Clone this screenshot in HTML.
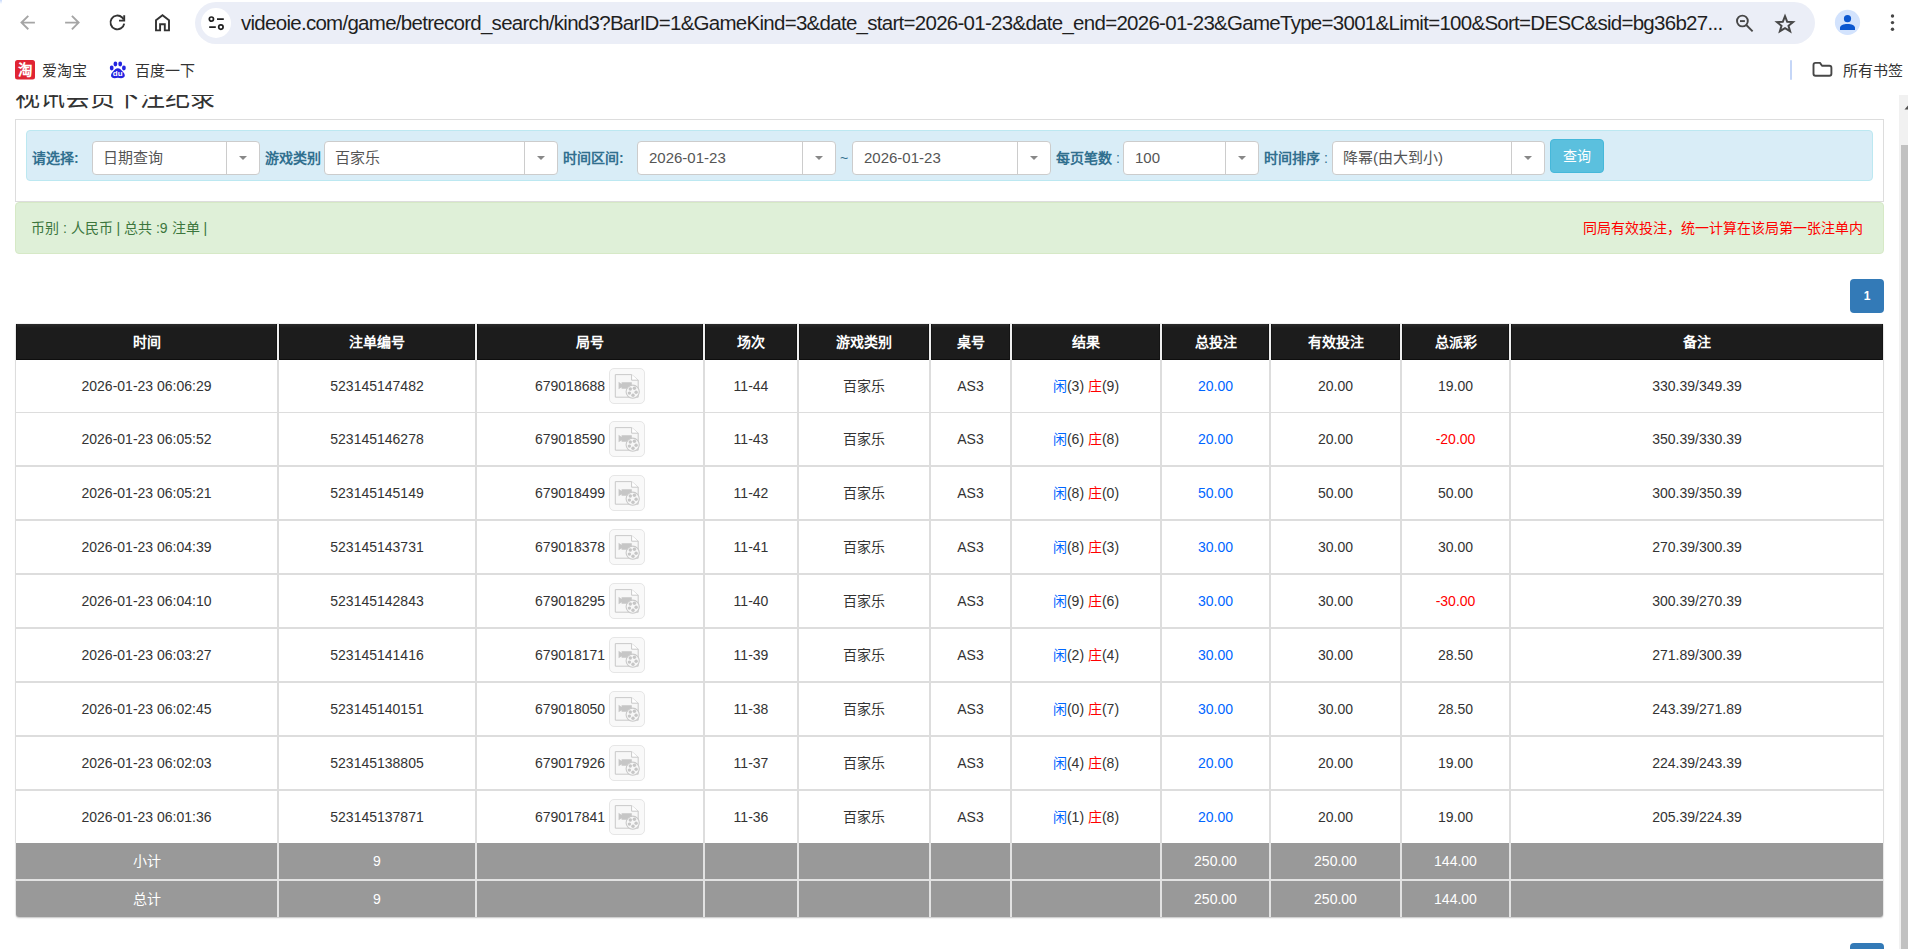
<!DOCTYPE html><html lang="zh-CN"><head><meta charset="utf-8"><style>
*{box-sizing:border-box;margin:0;padding:0}
html,body{width:1908px;height:949px;overflow:hidden;background:#fff}
body{position:relative;font-family:"Liberation Sans",sans-serif;font-size:14px;color:#333}
.a{position:absolute}
#chrome{position:absolute;left:0;top:0;width:1908px;height:95px;background:#fff;z-index:5}
#omni{position:absolute;left:195px;top:2px;width:1620px;height:42px;border-radius:21px;background:#ebeef7}
#siteinfo{position:absolute;left:201px;top:8px;width:30px;height:30px;border-radius:15px;background:#fff}
#url{position:absolute;left:241px;top:10px;font-size:20.5px;line-height:26px;color:#1f1f1f;white-space:nowrap;letter-spacing:-0.72px}
.bm{position:absolute;top:62px;font-size:15px;line-height:18px;color:#333;white-space:nowrap}
#sb{position:absolute;left:1899px;top:95px;width:9px;height:854px;background:#f1f1f1;z-index:4;overflow:hidden}
#sbthumb{position:absolute;left:2px;top:50px;width:7px;height:804px;background:#c1c1c1}
#title{position:absolute;left:15px;top:82px;font-size:25px;line-height:30px;color:#333;white-space:nowrap}
#panel{position:absolute;left:15px;top:119px;width:1869px;height:83px;border:1px solid #ddd;background:#fff}
#form{position:absolute;left:26px;top:130px;width:1847px;height:51px;border:1px solid #bce8f1;border-radius:4px;background:#d9edf7}
.lbl{position:absolute;top:149px;font-size:14px;line-height:18px;font-weight:bold;color:#31708f;white-space:nowrap}
.sel{position:absolute;top:141px;height:34px;border:1px solid #ccc;border-radius:4px;background:#fff}
.sel .t{position:absolute;left:10px;top:6px;font-size:15px;line-height:20px;color:#555;white-space:nowrap}
.sel .d{position:absolute;top:0;right:0;width:33px;height:32px;border-left:1px solid #ccc}
.sel .d:after{content:"";position:absolute;left:12px;top:14px;border-left:4px solid transparent;border-right:4px solid transparent;border-top:4px solid #888}
#btn{position:absolute;left:1550px;top:139px;width:54px;height:34px;border-radius:4px;background:#5bc0de;border:1px solid #46b8da;color:#fff;font-size:14px;line-height:32px;text-align:center}
#alert{position:absolute;left:15px;top:202px;width:1869px;height:52px;border:1px solid #d6e9c6;border-radius:4px;background:#dff0d8}
#alertL{position:absolute;left:31px;top:219px;font-size:14px;line-height:18px;color:#3c763d;white-space:nowrap}
#alertR{position:absolute;left:1583px;top:219px;font-size:14px;line-height:18px;color:#f00;white-space:nowrap}
.pg{position:absolute;left:1850px;width:34px;height:34px;border-radius:4px;background:#337ab7;color:#fff;font-size:12px;font-weight:bold;line-height:34px;text-align:center}
#tbl{position:absolute;left:16px;top:324px;width:1867px;height:593px;border-radius:0 0 3px 3px;box-shadow:0 0 1px rgba(0,0,0,.45),0 1px 2px rgba(0,0,0,.2)}
.c{position:absolute;display:flex;align-items:center;justify-content:center;white-space:nowrap;font-size:14px}
.h{background:linear-gradient(#2b2b2b,#1c1c1c 4px);color:#fff;font-weight:bold;padding-bottom:2px;box-shadow:inset 1px 0 0 #141414,inset -1px 0 0 #141414,inset 0 -1px 0 #0e0e0e}
.b{background:#fff;color:#333}
.f{background:#999;color:#fff}
.blue{color:#0066ff}
.up{position:relative;top:-1px}
.red{color:#ff0000}
.ico{display:inline-block;width:36px;height:36px;margin-left:4px;border:1px solid #e6e6e6;border-radius:5px;background:#f9f9f9;position:relative}
.ico svg{position:absolute;left:0;top:0}
</style></head><body>
<div id="title">视讯会员下注纪录</div>
<div id="panel"></div>
<div id="form"></div>
<div class="lbl" style="left:32px">请选择:</div>
<div class="sel" style="left:92px;width:168px"><div class="t">日期查询</div><div class="d"></div></div>
<div class="lbl" style="left:265px">游戏类别</div>
<div class="sel" style="left:324px;width:234px"><div class="t">百家乐</div><div class="d"></div></div>
<div class="lbl" style="left:563px">时间区间:</div>
<div class="sel" style="left:637px;width:199px"><div class="t" style="left:11px">2026-01-23</div><div class="d"></div></div>
<div class="lbl" style="left:840px;font-weight:normal">~</div>
<div class="sel" style="left:852px;width:199px"><div class="t" style="left:11px">2026-01-23</div><div class="d"></div></div>
<div class="lbl" style="left:1056px">每页笔数<span style="font-weight:normal"> :</span></div>
<div class="sel" style="left:1123px;width:136px"><div class="t" style="left:11px">100</div><div class="d"></div></div>
<div class="lbl" style="left:1264px">时间排序<span style="font-weight:normal"> :</span></div>
<div class="sel" style="left:1332px;width:213px"><div class="t">降幂(由大到小)</div><div class="d"></div></div>
<div id="btn">查询</div>
<div id="alert"></div>
<div id="alertL">币别 : 人民币 | 总共 :9 注单 |</div>
<div id="alertR">同局有效投注，统一计算在该局第一张注单内</div>
<div class="pg" style="top:279px">1</div>
<div class="pg" style="top:943px">1</div>
<div id="tbl"></div>
<div class="a" style="left:16px;top:324px;width:1867px;height:36px;background:#efefef"></div>
<div class="a" style="left:15px;top:360px;width:1869px;height:483px;background:#ddd"></div>
<div class="a" style="left:16px;top:843px;width:1867px;height:74px;background:#e2e2e2;border-radius:0 0 3px 3px"></div>
<div class="c h" style="left:16px;top:324px;width:261px;height:36px">时间</div>
<div class="c h" style="left:279px;top:324px;width:196px;height:36px">注单编号</div>
<div class="c h" style="left:477px;top:324px;width:226px;height:36px">局号</div>
<div class="c h" style="left:705px;top:324px;width:92px;height:36px">场次</div>
<div class="c h" style="left:799px;top:324px;width:130px;height:36px">游戏类别</div>
<div class="c h" style="left:931px;top:324px;width:79px;height:36px">桌号</div>
<div class="c h" style="left:1012px;top:324px;width:148px;height:36px">结果</div>
<div class="c h" style="left:1162px;top:324px;width:107px;height:36px">总投注</div>
<div class="c h" style="left:1271px;top:324px;width:129px;height:36px">有效投注</div>
<div class="c h" style="left:1402px;top:324px;width:107px;height:36px">总派彩</div>
<div class="c h" style="left:1511px;top:324px;width:372px;height:36px">备注</div>
<div class="c b" style="left:16px;top:360px;width:261px;height:52px">2026-01-23 06:06:29</div>
<div class="c b" style="left:279px;top:360px;width:196px;height:52px">523145147482</div>
<div class="c b" style="left:477px;top:360px;width:226px;height:52px">679018688<span class="ico"><svg width="34" height="34" viewBox="0 0 34 34"><path d="M5.3 5.6H21.6L28.2 11.2V28.2H5.3Z" fill="#f7f7f7" stroke="#c9c9c9" stroke-width="1"/><path d="M21.6 5.6V11.2H28.2" fill="#fff" stroke="#c9c9c9" stroke-width="1"/><path d="M8.6 12.8L11.6 15V13.2H21.8V19.8H11.6V18.2L8.6 20.2Z" fill="#c6c6c6"/><circle cx="22.7" cy="22.7" r="6.6" fill="#f7f7f7" stroke="#c9c9c9" stroke-width="1.1"/><g fill="#c6c6c6"><circle cx="20.3" cy="20" r="1.7"/><circle cx="24.4" cy="19.2" r="1.7"/><circle cx="26.1" cy="23.3" r="1.7"/><circle cx="23" cy="26.3" r="1.7"/><circle cx="19.4" cy="24.1" r="1.7"/></g></svg></span></div>
<div class="c b" style="left:705px;top:360px;width:92px;height:52px">11-44</div>
<div class="c b" style="left:799px;top:360px;width:130px;height:52px"><span class="up">百家乐</span></div>
<div class="c b" style="left:931px;top:360px;width:79px;height:52px">AS3</div>
<div class="c b" style="left:1012px;top:360px;width:148px;height:52px"><span class="blue up">闲</span>(3)&nbsp;<span class="red up">庄</span>(9)</div>
<div class="c b" style="left:1162px;top:360px;width:107px;height:52px"><span class="blue">20.00</span></div>
<div class="c b" style="left:1271px;top:360px;width:129px;height:52px">20.00</div>
<div class="c b" style="left:1402px;top:360px;width:107px;height:52px">19.00</div>
<div class="c b" style="left:1511px;top:360px;width:372px;height:52px">330.39/349.39</div>
<div class="c b" style="left:16px;top:413px;width:261px;height:52px">2026-01-23 06:05:52</div>
<div class="c b" style="left:279px;top:413px;width:196px;height:52px">523145146278</div>
<div class="c b" style="left:477px;top:413px;width:226px;height:52px">679018590<span class="ico"><svg width="34" height="34" viewBox="0 0 34 34"><path d="M5.3 5.6H21.6L28.2 11.2V28.2H5.3Z" fill="#f7f7f7" stroke="#c9c9c9" stroke-width="1"/><path d="M21.6 5.6V11.2H28.2" fill="#fff" stroke="#c9c9c9" stroke-width="1"/><path d="M8.6 12.8L11.6 15V13.2H21.8V19.8H11.6V18.2L8.6 20.2Z" fill="#c6c6c6"/><circle cx="22.7" cy="22.7" r="6.6" fill="#f7f7f7" stroke="#c9c9c9" stroke-width="1.1"/><g fill="#c6c6c6"><circle cx="20.3" cy="20" r="1.7"/><circle cx="24.4" cy="19.2" r="1.7"/><circle cx="26.1" cy="23.3" r="1.7"/><circle cx="23" cy="26.3" r="1.7"/><circle cx="19.4" cy="24.1" r="1.7"/></g></svg></span></div>
<div class="c b" style="left:705px;top:413px;width:92px;height:52px">11-43</div>
<div class="c b" style="left:799px;top:413px;width:130px;height:52px"><span class="up">百家乐</span></div>
<div class="c b" style="left:931px;top:413px;width:79px;height:52px">AS3</div>
<div class="c b" style="left:1012px;top:413px;width:148px;height:52px"><span class="blue up">闲</span>(6)&nbsp;<span class="red up">庄</span>(8)</div>
<div class="c b" style="left:1162px;top:413px;width:107px;height:52px"><span class="blue">20.00</span></div>
<div class="c b" style="left:1271px;top:413px;width:129px;height:52px">20.00</div>
<div class="c b" style="left:1402px;top:413px;width:107px;height:52px"><span class="red">-20.00</span></div>
<div class="c b" style="left:1511px;top:413px;width:372px;height:52px">350.39/330.39</div>
<div class="c b" style="left:16px;top:467px;width:261px;height:52px">2026-01-23 06:05:21</div>
<div class="c b" style="left:279px;top:467px;width:196px;height:52px">523145145149</div>
<div class="c b" style="left:477px;top:467px;width:226px;height:52px">679018499<span class="ico"><svg width="34" height="34" viewBox="0 0 34 34"><path d="M5.3 5.6H21.6L28.2 11.2V28.2H5.3Z" fill="#f7f7f7" stroke="#c9c9c9" stroke-width="1"/><path d="M21.6 5.6V11.2H28.2" fill="#fff" stroke="#c9c9c9" stroke-width="1"/><path d="M8.6 12.8L11.6 15V13.2H21.8V19.8H11.6V18.2L8.6 20.2Z" fill="#c6c6c6"/><circle cx="22.7" cy="22.7" r="6.6" fill="#f7f7f7" stroke="#c9c9c9" stroke-width="1.1"/><g fill="#c6c6c6"><circle cx="20.3" cy="20" r="1.7"/><circle cx="24.4" cy="19.2" r="1.7"/><circle cx="26.1" cy="23.3" r="1.7"/><circle cx="23" cy="26.3" r="1.7"/><circle cx="19.4" cy="24.1" r="1.7"/></g></svg></span></div>
<div class="c b" style="left:705px;top:467px;width:92px;height:52px">11-42</div>
<div class="c b" style="left:799px;top:467px;width:130px;height:52px"><span class="up">百家乐</span></div>
<div class="c b" style="left:931px;top:467px;width:79px;height:52px">AS3</div>
<div class="c b" style="left:1012px;top:467px;width:148px;height:52px"><span class="blue up">闲</span>(8)&nbsp;<span class="red up">庄</span>(0)</div>
<div class="c b" style="left:1162px;top:467px;width:107px;height:52px"><span class="blue">50.00</span></div>
<div class="c b" style="left:1271px;top:467px;width:129px;height:52px">50.00</div>
<div class="c b" style="left:1402px;top:467px;width:107px;height:52px">50.00</div>
<div class="c b" style="left:1511px;top:467px;width:372px;height:52px">300.39/350.39</div>
<div class="c b" style="left:16px;top:521px;width:261px;height:52px">2026-01-23 06:04:39</div>
<div class="c b" style="left:279px;top:521px;width:196px;height:52px">523145143731</div>
<div class="c b" style="left:477px;top:521px;width:226px;height:52px">679018378<span class="ico"><svg width="34" height="34" viewBox="0 0 34 34"><path d="M5.3 5.6H21.6L28.2 11.2V28.2H5.3Z" fill="#f7f7f7" stroke="#c9c9c9" stroke-width="1"/><path d="M21.6 5.6V11.2H28.2" fill="#fff" stroke="#c9c9c9" stroke-width="1"/><path d="M8.6 12.8L11.6 15V13.2H21.8V19.8H11.6V18.2L8.6 20.2Z" fill="#c6c6c6"/><circle cx="22.7" cy="22.7" r="6.6" fill="#f7f7f7" stroke="#c9c9c9" stroke-width="1.1"/><g fill="#c6c6c6"><circle cx="20.3" cy="20" r="1.7"/><circle cx="24.4" cy="19.2" r="1.7"/><circle cx="26.1" cy="23.3" r="1.7"/><circle cx="23" cy="26.3" r="1.7"/><circle cx="19.4" cy="24.1" r="1.7"/></g></svg></span></div>
<div class="c b" style="left:705px;top:521px;width:92px;height:52px">11-41</div>
<div class="c b" style="left:799px;top:521px;width:130px;height:52px"><span class="up">百家乐</span></div>
<div class="c b" style="left:931px;top:521px;width:79px;height:52px">AS3</div>
<div class="c b" style="left:1012px;top:521px;width:148px;height:52px"><span class="blue up">闲</span>(8)&nbsp;<span class="red up">庄</span>(3)</div>
<div class="c b" style="left:1162px;top:521px;width:107px;height:52px"><span class="blue">30.00</span></div>
<div class="c b" style="left:1271px;top:521px;width:129px;height:52px">30.00</div>
<div class="c b" style="left:1402px;top:521px;width:107px;height:52px">30.00</div>
<div class="c b" style="left:1511px;top:521px;width:372px;height:52px">270.39/300.39</div>
<div class="c b" style="left:16px;top:575px;width:261px;height:52px">2026-01-23 06:04:10</div>
<div class="c b" style="left:279px;top:575px;width:196px;height:52px">523145142843</div>
<div class="c b" style="left:477px;top:575px;width:226px;height:52px">679018295<span class="ico"><svg width="34" height="34" viewBox="0 0 34 34"><path d="M5.3 5.6H21.6L28.2 11.2V28.2H5.3Z" fill="#f7f7f7" stroke="#c9c9c9" stroke-width="1"/><path d="M21.6 5.6V11.2H28.2" fill="#fff" stroke="#c9c9c9" stroke-width="1"/><path d="M8.6 12.8L11.6 15V13.2H21.8V19.8H11.6V18.2L8.6 20.2Z" fill="#c6c6c6"/><circle cx="22.7" cy="22.7" r="6.6" fill="#f7f7f7" stroke="#c9c9c9" stroke-width="1.1"/><g fill="#c6c6c6"><circle cx="20.3" cy="20" r="1.7"/><circle cx="24.4" cy="19.2" r="1.7"/><circle cx="26.1" cy="23.3" r="1.7"/><circle cx="23" cy="26.3" r="1.7"/><circle cx="19.4" cy="24.1" r="1.7"/></g></svg></span></div>
<div class="c b" style="left:705px;top:575px;width:92px;height:52px">11-40</div>
<div class="c b" style="left:799px;top:575px;width:130px;height:52px"><span class="up">百家乐</span></div>
<div class="c b" style="left:931px;top:575px;width:79px;height:52px">AS3</div>
<div class="c b" style="left:1012px;top:575px;width:148px;height:52px"><span class="blue up">闲</span>(9)&nbsp;<span class="red up">庄</span>(6)</div>
<div class="c b" style="left:1162px;top:575px;width:107px;height:52px"><span class="blue">30.00</span></div>
<div class="c b" style="left:1271px;top:575px;width:129px;height:52px">30.00</div>
<div class="c b" style="left:1402px;top:575px;width:107px;height:52px"><span class="red">-30.00</span></div>
<div class="c b" style="left:1511px;top:575px;width:372px;height:52px">300.39/270.39</div>
<div class="c b" style="left:16px;top:629px;width:261px;height:52px">2026-01-23 06:03:27</div>
<div class="c b" style="left:279px;top:629px;width:196px;height:52px">523145141416</div>
<div class="c b" style="left:477px;top:629px;width:226px;height:52px">679018171<span class="ico"><svg width="34" height="34" viewBox="0 0 34 34"><path d="M5.3 5.6H21.6L28.2 11.2V28.2H5.3Z" fill="#f7f7f7" stroke="#c9c9c9" stroke-width="1"/><path d="M21.6 5.6V11.2H28.2" fill="#fff" stroke="#c9c9c9" stroke-width="1"/><path d="M8.6 12.8L11.6 15V13.2H21.8V19.8H11.6V18.2L8.6 20.2Z" fill="#c6c6c6"/><circle cx="22.7" cy="22.7" r="6.6" fill="#f7f7f7" stroke="#c9c9c9" stroke-width="1.1"/><g fill="#c6c6c6"><circle cx="20.3" cy="20" r="1.7"/><circle cx="24.4" cy="19.2" r="1.7"/><circle cx="26.1" cy="23.3" r="1.7"/><circle cx="23" cy="26.3" r="1.7"/><circle cx="19.4" cy="24.1" r="1.7"/></g></svg></span></div>
<div class="c b" style="left:705px;top:629px;width:92px;height:52px">11-39</div>
<div class="c b" style="left:799px;top:629px;width:130px;height:52px"><span class="up">百家乐</span></div>
<div class="c b" style="left:931px;top:629px;width:79px;height:52px">AS3</div>
<div class="c b" style="left:1012px;top:629px;width:148px;height:52px"><span class="blue up">闲</span>(2)&nbsp;<span class="red up">庄</span>(4)</div>
<div class="c b" style="left:1162px;top:629px;width:107px;height:52px"><span class="blue">30.00</span></div>
<div class="c b" style="left:1271px;top:629px;width:129px;height:52px">30.00</div>
<div class="c b" style="left:1402px;top:629px;width:107px;height:52px">28.50</div>
<div class="c b" style="left:1511px;top:629px;width:372px;height:52px">271.89/300.39</div>
<div class="c b" style="left:16px;top:683px;width:261px;height:52px">2026-01-23 06:02:45</div>
<div class="c b" style="left:279px;top:683px;width:196px;height:52px">523145140151</div>
<div class="c b" style="left:477px;top:683px;width:226px;height:52px">679018050<span class="ico"><svg width="34" height="34" viewBox="0 0 34 34"><path d="M5.3 5.6H21.6L28.2 11.2V28.2H5.3Z" fill="#f7f7f7" stroke="#c9c9c9" stroke-width="1"/><path d="M21.6 5.6V11.2H28.2" fill="#fff" stroke="#c9c9c9" stroke-width="1"/><path d="M8.6 12.8L11.6 15V13.2H21.8V19.8H11.6V18.2L8.6 20.2Z" fill="#c6c6c6"/><circle cx="22.7" cy="22.7" r="6.6" fill="#f7f7f7" stroke="#c9c9c9" stroke-width="1.1"/><g fill="#c6c6c6"><circle cx="20.3" cy="20" r="1.7"/><circle cx="24.4" cy="19.2" r="1.7"/><circle cx="26.1" cy="23.3" r="1.7"/><circle cx="23" cy="26.3" r="1.7"/><circle cx="19.4" cy="24.1" r="1.7"/></g></svg></span></div>
<div class="c b" style="left:705px;top:683px;width:92px;height:52px">11-38</div>
<div class="c b" style="left:799px;top:683px;width:130px;height:52px"><span class="up">百家乐</span></div>
<div class="c b" style="left:931px;top:683px;width:79px;height:52px">AS3</div>
<div class="c b" style="left:1012px;top:683px;width:148px;height:52px"><span class="blue up">闲</span>(0)&nbsp;<span class="red up">庄</span>(7)</div>
<div class="c b" style="left:1162px;top:683px;width:107px;height:52px"><span class="blue">30.00</span></div>
<div class="c b" style="left:1271px;top:683px;width:129px;height:52px">30.00</div>
<div class="c b" style="left:1402px;top:683px;width:107px;height:52px">28.50</div>
<div class="c b" style="left:1511px;top:683px;width:372px;height:52px">243.39/271.89</div>
<div class="c b" style="left:16px;top:737px;width:261px;height:52px">2026-01-23 06:02:03</div>
<div class="c b" style="left:279px;top:737px;width:196px;height:52px">523145138805</div>
<div class="c b" style="left:477px;top:737px;width:226px;height:52px">679017926<span class="ico"><svg width="34" height="34" viewBox="0 0 34 34"><path d="M5.3 5.6H21.6L28.2 11.2V28.2H5.3Z" fill="#f7f7f7" stroke="#c9c9c9" stroke-width="1"/><path d="M21.6 5.6V11.2H28.2" fill="#fff" stroke="#c9c9c9" stroke-width="1"/><path d="M8.6 12.8L11.6 15V13.2H21.8V19.8H11.6V18.2L8.6 20.2Z" fill="#c6c6c6"/><circle cx="22.7" cy="22.7" r="6.6" fill="#f7f7f7" stroke="#c9c9c9" stroke-width="1.1"/><g fill="#c6c6c6"><circle cx="20.3" cy="20" r="1.7"/><circle cx="24.4" cy="19.2" r="1.7"/><circle cx="26.1" cy="23.3" r="1.7"/><circle cx="23" cy="26.3" r="1.7"/><circle cx="19.4" cy="24.1" r="1.7"/></g></svg></span></div>
<div class="c b" style="left:705px;top:737px;width:92px;height:52px">11-37</div>
<div class="c b" style="left:799px;top:737px;width:130px;height:52px"><span class="up">百家乐</span></div>
<div class="c b" style="left:931px;top:737px;width:79px;height:52px">AS3</div>
<div class="c b" style="left:1012px;top:737px;width:148px;height:52px"><span class="blue up">闲</span>(4)&nbsp;<span class="red up">庄</span>(8)</div>
<div class="c b" style="left:1162px;top:737px;width:107px;height:52px"><span class="blue">20.00</span></div>
<div class="c b" style="left:1271px;top:737px;width:129px;height:52px">20.00</div>
<div class="c b" style="left:1402px;top:737px;width:107px;height:52px">19.00</div>
<div class="c b" style="left:1511px;top:737px;width:372px;height:52px">224.39/243.39</div>
<div class="c b" style="left:16px;top:791px;width:261px;height:52px">2026-01-23 06:01:36</div>
<div class="c b" style="left:279px;top:791px;width:196px;height:52px">523145137871</div>
<div class="c b" style="left:477px;top:791px;width:226px;height:52px">679017841<span class="ico"><svg width="34" height="34" viewBox="0 0 34 34"><path d="M5.3 5.6H21.6L28.2 11.2V28.2H5.3Z" fill="#f7f7f7" stroke="#c9c9c9" stroke-width="1"/><path d="M21.6 5.6V11.2H28.2" fill="#fff" stroke="#c9c9c9" stroke-width="1"/><path d="M8.6 12.8L11.6 15V13.2H21.8V19.8H11.6V18.2L8.6 20.2Z" fill="#c6c6c6"/><circle cx="22.7" cy="22.7" r="6.6" fill="#f7f7f7" stroke="#c9c9c9" stroke-width="1.1"/><g fill="#c6c6c6"><circle cx="20.3" cy="20" r="1.7"/><circle cx="24.4" cy="19.2" r="1.7"/><circle cx="26.1" cy="23.3" r="1.7"/><circle cx="23" cy="26.3" r="1.7"/><circle cx="19.4" cy="24.1" r="1.7"/></g></svg></span></div>
<div class="c b" style="left:705px;top:791px;width:92px;height:52px">11-36</div>
<div class="c b" style="left:799px;top:791px;width:130px;height:52px"><span class="up">百家乐</span></div>
<div class="c b" style="left:931px;top:791px;width:79px;height:52px">AS3</div>
<div class="c b" style="left:1012px;top:791px;width:148px;height:52px"><span class="blue up">闲</span>(1)&nbsp;<span class="red up">庄</span>(8)</div>
<div class="c b" style="left:1162px;top:791px;width:107px;height:52px"><span class="blue">20.00</span></div>
<div class="c b" style="left:1271px;top:791px;width:129px;height:52px">20.00</div>
<div class="c b" style="left:1402px;top:791px;width:107px;height:52px">19.00</div>
<div class="c b" style="left:1511px;top:791px;width:372px;height:52px">205.39/224.39</div>
<div class="c f" style="left:16px;top:843px;width:261px;height:36px"><span class="up">小计</span></div>
<div class="c f" style="left:279px;top:843px;width:196px;height:36px">9</div>
<div class="c f" style="left:477px;top:843px;width:226px;height:36px"></div>
<div class="c f" style="left:705px;top:843px;width:92px;height:36px"></div>
<div class="c f" style="left:799px;top:843px;width:130px;height:36px"></div>
<div class="c f" style="left:931px;top:843px;width:79px;height:36px"></div>
<div class="c f" style="left:1012px;top:843px;width:148px;height:36px"></div>
<div class="c f" style="left:1162px;top:843px;width:107px;height:36px">250.00</div>
<div class="c f" style="left:1271px;top:843px;width:129px;height:36px">250.00</div>
<div class="c f" style="left:1402px;top:843px;width:107px;height:36px">144.00</div>
<div class="c f" style="left:1511px;top:843px;width:372px;height:36px"></div>
<div class="c f" style="border-bottom-left-radius:3px;left:16px;top:881px;width:261px;height:36px"><span class="up">总计</span></div>
<div class="c f" style="left:279px;top:881px;width:196px;height:36px">9</div>
<div class="c f" style="left:477px;top:881px;width:226px;height:36px"></div>
<div class="c f" style="left:705px;top:881px;width:92px;height:36px"></div>
<div class="c f" style="left:799px;top:881px;width:130px;height:36px"></div>
<div class="c f" style="left:931px;top:881px;width:79px;height:36px"></div>
<div class="c f" style="left:1012px;top:881px;width:148px;height:36px"></div>
<div class="c f" style="left:1162px;top:881px;width:107px;height:36px">250.00</div>
<div class="c f" style="left:1271px;top:881px;width:129px;height:36px">250.00</div>
<div class="c f" style="left:1402px;top:881px;width:107px;height:36px">144.00</div>
<div class="c f" style="border-bottom-right-radius:3px;left:1511px;top:881px;width:372px;height:36px"></div>
<div id="chrome"><div class="a" style="left:0;top:0;width:2px;height:4px;background:linear-gradient(#c8dafc,#fff)"></div>
 <svg class="a" style="left:0;top:0" width="190" height="48" viewBox="0 0 190 48">
  <g fill="none" stroke="#a5a5a5" stroke-width="1.9" stroke-linecap="butt">
   <path d="M34.9 22.6H21.5M28.3 15.9L21.5 22.6L28.3 29.3"/>
   <path d="M65.1 22.6H78.6M71.9 15.9L78.6 22.6L71.9 29.3"/>
  </g>
  <g fill="none" stroke="#333" stroke-width="1.9">
   <path d="M124.2 23.6A6.9 6.9 0 1 1 122.2 17.5L123.6 19.4"/>
   <path d="M119 20.6H124.2V15.2" stroke-linecap="butt"/>
   <path d="M156 30.4V20.3L162.5 15.3L169 20.3V30.4H164.8V24.2H160.1V30.4Z" stroke-linejoin="miter"/>
  </g>
 </svg>
 <div id="omni"></div>
 <div id="siteinfo"></div>
 <svg class="a" style="left:201px;top:8px" width="30" height="30" viewBox="0 0 30 30">
  <g fill="none" stroke="#1f1f1f" stroke-width="1.7">
   <circle cx="10.4" cy="11.1" r="2.1"/>
   <circle cx="19.9" cy="19.1" r="2.2"/>
   <path d="M16 11.1H22.8M8.2 19.1H14.8"/>
  </g>
 </svg>
 <div id="url">videoie.com/game/betrecord_search/kind3?BarID=1&amp;GameKind=3&amp;date_start=2026-01-23&amp;date_end=2026-01-23&amp;GameType=3001&amp;Limit=100&amp;Sort=DESC&amp;sid=bg36b27...</div>
 <svg class="a" style="left:1730px;top:10px" width="72" height="28" viewBox="0 0 72 28">
  <g fill="none" stroke="#474747" stroke-width="1.9">
   <circle cx="12.4" cy="11" r="5.4"/>
   <path d="M16.3 15L22.6 21.4"/>
   <path d="M10 11.1H14.9"/>
  </g>
  <path d="M55 6.2L57.2 11.8L63 12.1L58.5 15.8L60.1 21.2L55 18.1L49.9 21.2L51.5 15.8L47 12.1L52.8 11.8Z" fill="none" stroke="#474747" stroke-width="2" stroke-linejoin="miter"/>
 </svg>
 <svg class="a" style="left:1834px;top:9px" width="74" height="28" viewBox="0 0 74 28">
  <circle cx="13.5" cy="13.4" r="12.6" fill="#d3e3fd"/>
  <circle cx="13.5" cy="9.7" r="3.6" fill="#0b57d0"/>
  <path d="M6 21.1V18.7C6 16.3 9.4 14.9 13.5 14.9C17.6 14.9 21 16.3 21 18.7V21.1Z" fill="#0b57d0"/>
  <circle cx="58.5" cy="7" r="1.7" fill="#474747"/>
  <circle cx="58.5" cy="13.6" r="1.7" fill="#474747"/>
  <circle cx="58.5" cy="20.2" r="1.7" fill="#474747"/>
 </svg>
 <svg class="a" style="left:14px;top:59px" width="24" height="22" viewBox="0 0 24 22">
  <rect x="1" y="1" width="20" height="19.5" rx="2.5" fill="#e02433"/>
  <text x="10.8" y="16.2" font-size="14.5" font-weight="bold" fill="#fff" text-anchor="middle">淘</text>
 </svg>
 <div class="bm" style="left:42px">爱淘宝</div>
 <svg class="a" style="left:108px;top:60px" width="20" height="20" viewBox="0 0 20 20">
  <g fill="#2424e0">
   <ellipse cx="3.7" cy="8" rx="1.9" ry="2.4"/>
   <ellipse cx="7.4" cy="4" rx="1.9" ry="2.4"/>
   <ellipse cx="12.2" cy="4" rx="1.9" ry="2.4"/>
   <ellipse cx="15.9" cy="8" rx="1.9" ry="2.4"/>
   <path d="M9.8 8.2C8 8.2 6.8 9.6 5.5 11C4 12.6 3 14 3 15.6C3 17.6 4.8 18.2 6.5 18.2C7.8 18.2 8.8 17.8 9.8 17.8C10.8 17.8 11.8 18.2 13.1 18.2C14.8 18.2 16.8 17.6 16.8 15.6C16.8 14 15.8 12.6 14.2 11C12.9 9.6 11.6 8.2 9.8 8.2Z"/>
  </g>
  <text x="9.7" y="16.3" font-size="8" font-weight="bold" fill="#fff" text-anchor="middle" font-family="Liberation Sans">du</text>
 </svg>
 <div class="bm" style="left:135px">百度一下</div>
 <div class="a" style="left:1790px;top:60px;width:2px;height:20px;background:#c5d6f7;border-radius:1px"></div>
 <svg class="a" style="left:1811px;top:59px" width="24" height="22" viewBox="0 0 24 22">
  <path d="M4.5 3.9H9L11 6.7H18.4Q20.4 6.7 20.4 8.7V14.7Q20.4 16.7 18.4 16.7H4.5Q2.5 16.7 2.5 14.7V5.9Q2.5 3.9 4.5 3.9Z" fill="none" stroke="#474747" stroke-width="1.9" stroke-linejoin="round"/>
 </svg>
 <div class="bm" style="left:1843px">所有书签</div>
</div>
<div id="sb"><div id="sbthumb"></div>
 <svg class="a" style="left:0;top:0" width="9" height="50" viewBox="0 0 9 50"><path d="M5.5 14.5L9 10.5L12.5 14.5Z" fill="#505050"/></svg>
</div>
</body></html>
